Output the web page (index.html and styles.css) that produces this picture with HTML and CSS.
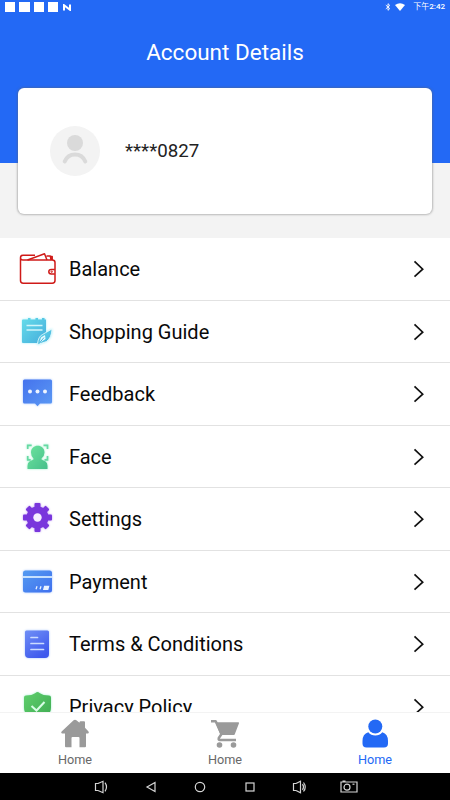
FILE: index.html
```html
<!DOCTYPE html>
<html lang="en">
<head>
<meta charset="utf-8">
<title>Account Details</title>
<link rel="stylesheet" href="styles.css">
</head>
<body>
<div class="screen">
  <header class="hero">
    <div class="status">
      <div class="status-left">
        <i class="square"></i><i class="square"></i><i class="square"></i><i class="square"></i>
        <svg class="nfc" width="8" height="7" viewBox="0 0 8 7"><path d="M1 6.500V1.200L7 5.800V.5" fill="none" stroke="#fff" stroke-width="2"/></svg>
      </div>
      <div class="status-right">
        <svg class="bluetooth" width="6" height="8" viewBox="0 0 6 8"><path d="M.8 2.1 4.8 5.6 3 7.3V.7L4.8 2.4.8 5.9" fill="none" stroke="#fff" stroke-width=".9"/></svg>
        <svg class="wifi" width="10" height="8" viewBox="0 0 10 8"><path d="M0 2Q5-1.600 10 2L5 8Z" fill="#fff"/></svg>
        <span class="clock">下午<b>2:42</b></span>
      </div>
    </div>
    <h1 class="title">Account Details</h1>
  </header>

  <section class="card">
    <svg class="avatar" width="50" height="50" viewBox="0 0 50 50">
      <circle cx="25" cy="25" r="25" fill="#f3f3f3"/>
      <circle cx="25" cy="17" r="8" fill="#dadada"/>
      <path d="M14.700 35.500C18.500 26 31.500 26 35.300 35.500" fill="none" stroke="#dadada" stroke-width="4" stroke-linecap="round"/>
    </svg>
    <span class="phone">****0827</span>
  </section>

  <main class="menu">
    <div class="row">
      <svg class="icon" width="40" height="40" viewBox="0 0 40 40" fill="none" stroke="#cf1a18" stroke-width="1.500" stroke-linejoin="round">
        <path d="M3.500 8.500v23q0 2.700 2.700 2.700h29q2.800 0 2.800-2.700V13.500q0-2.500-2.800-2.500H6q-2.500 0-2.500-2.300Q3.500 6.300 6 6.300h12"/>
        <path d="m10.500 11 17-6.200L30 11M29.500 7h3.800l.8 4M33.500 7.500h1.700V11M37.800 20.500h-3.500q-2.500 0-2.500 2.200t2.500 2.200h3.500"/>
        <circle cx="34.700" cy="22.700" r=".7" stroke-width="1"/>
      </svg>
      <span class="label">Balance</span>
      <svg class="chevron" width="12" height="18" viewBox="0 0 12 18"><path d="m1.500 1.300 8.200 7.900-8.200 7.500"/></svg>
    </div>
    <div class="row">
      <svg class="icon glow-cyan" width="40" height="40" viewBox="0 0 40 40">
        <defs><linearGradient id="cyan" x2="1" y2="1"><stop stop-color="#65dcea"/><stop offset="1" stop-color="#45addc"/></linearGradient></defs>
        <path d="M6 7.500h5V6h2.500v1.500h5V6H21v1.500h4V6h2.500v1.500H29v13.500L20 31H6q-1 0-1-1V8.500q0-1 1-1Z" fill="url(#cyan)"/>
        <path d="M9.500 13.500h16M9.500 18h16" stroke="#d0f5fa" stroke-width="1.500"/>
        <path d="M20.500 32.500q.5-8 5-10L35 17q-.5 9-5.500 12.500Z" fill="url(#cyan)" stroke="#fff" stroke-width=".7"/>
        <path d="m22.500 31 1.500-5.500 4-2.500.5 4Z" fill="#e8fbff"/><path d="m22 31.500 5-6" stroke="#49b4dd"/>
      </svg>
      <span class="label">Shopping Guide</span>
      <svg class="chevron" width="12" height="18" viewBox="0 0 12 18"><path d="m1.500 1.300 8.200 7.900-8.200 7.500"/></svg>
    </div>
    <div class="row">
      <svg class="icon glow-blue" width="40" height="40" viewBox="0 0 40 40">
        <defs><linearGradient id="chat" x2="1" y2="1"><stop stop-color="#4573ed"/><stop offset="1" stop-color="#5b99f4"/></linearGradient></defs>
        <path d="M7.500 5.500h26q1.500 0 1.500 1.500v21q0 1.500-1.500 1.500H23l-2.500 2.700-2.500-2.700H7.500Q6 29.500 6 28V7q0-1.500 1.500-1.500Z" fill="url(#chat)"/>
        <g fill="#edf4ff"><circle cx="13" cy="17.500" r="2"/><circle cx="20.500" cy="17.500" r="2"/><circle cx="28" cy="17.500" r="2"/></g>
      </svg>
      <span class="label">Feedback</span>
      <svg class="chevron" width="12" height="18" viewBox="0 0 12 18"><path d="m1.500 1.300 8.200 7.900-8.200 7.500"/></svg>
    </div>
    <div class="row">
      <svg class="icon glow-green" width="40" height="40" viewBox="0 0 40 40">
        <defs><linearGradient id="face" x2="1" y2="1"><stop stop-color="#6ce39d"/><stop offset="1" stop-color="#46bf8b"/></linearGradient></defs>
        <path d="M10.700 12V8.300h4M26.500 8.300h4V12M10.700 19v3.800h3M30.500 19v3.800h-3" fill="none" stroke="#67d9a3" stroke-width="1.700"/>
        <path d="M14 15.500C14 6.500 27.500 6.500 27.500 15.500q0 3.500-3 6v1l4 2q2 1 2 4.500v3h-20v-3q0-3.500 2-4.500l4-2v-1q-2.500-2.500-2.500-6Z" fill="url(#face)"/>
      </svg>
      <span class="label">Face</span>
      <svg class="chevron" width="12" height="18" viewBox="0 0 12 18"><path d="m1.500 1.300 8.200 7.900-8.200 7.500"/></svg>
    </div>
    <div class="row">
      <svg class="icon glow-purple" width="40" height="40" viewBox="0 0 40 40">
        <g fill="#7936dc">
          <rect x="17.500" y="4" width="6" height="29" rx="1"/><rect x="6" y="15.500" width="29" height="6" rx="1"/>
          <g transform="rotate(45 20.500 18.500)"><rect x="17.700" y="4.300" width="5.600" height="28.400" rx="1"/><rect x="6.300" y="15.700" width="28.400" height="5.600" rx="1"/></g>
          <circle cx="20.500" cy="18.500" r="11"/>
        </g>
        <circle cx="20.500" cy="18.500" r="4.200" fill="#f5eeff"/>
      </svg>
      <span class="label">Settings</span>
      <svg class="chevron" width="12" height="18" viewBox="0 0 12 18"><path d="m1.500 1.300 8.200 7.900-8.200 7.500"/></svg>
    </div>
    <div class="row">
      <svg class="icon glow-blue" width="40" height="40" viewBox="0 0 40 40">
        <defs><linearGradient id="pay" x2="1" y2="1"><stop stop-color="#559bf1"/><stop offset="1" stop-color="#3f70ee"/></linearGradient></defs>
        <rect x="6" y="8.500" width="29" height="22" rx="2.500" fill="url(#pay)"/>
        <path d="M6 15h29" stroke="#d5eaff" stroke-width="1.800"/>
        <path d="m19 27.300 1-3M23 27.300l1-3M26.800 27.300l.8-3h4l-.8 3Z" stroke="#e8f2ff" stroke-width="1.300" fill="#e8f2ff"/>
      </svg>
      <span class="label">Payment</span>
      <svg class="chevron" width="12" height="18" viewBox="0 0 12 18"><path d="m1.500 1.300 8.200 7.900-8.200 7.500"/></svg>
    </div>
    <div class="row">
      <svg class="icon glow-blue" width="40" height="40" viewBox="0 0 40 40">
        <defs><linearGradient id="doc" x2=".6" y2="1"><stop stop-color="#708ff6"/><stop offset="1" stop-color="#3e59ed"/></linearGradient></defs>
        <path d="M9.500 6.500h21q1.500 0 1.500 1.500v22q0 4-4 4H12q-4 0-4-4V8q0-1.500 1.500-1.500Z" fill="url(#doc)"/>
        <path d="M14 13.500h6.500M14 19.500h12.500M14 25.500h12.500" stroke="#cbdcff" stroke-width="1.700" stroke-linecap="round"/>
      </svg>
      <span class="label">Terms &amp; Conditions</span>
      <svg class="chevron" width="12" height="18" viewBox="0 0 12 18"><path d="m1.500 1.300 8.200 7.900-8.200 7.500"/></svg>
    </div>
    <div class="row">
      <svg class="icon glow-green" width="40" height="40" viewBox="0 0 40 40">
        <defs><linearGradient id="shield" x2="1" y2="1"><stop stop-color="#5fcf6c"/><stop offset="1" stop-color="#3da951"/></linearGradient></defs>
        <path d="M20.500 5q1 0 2 1 3.500 2.500 9.500 2.500 2 0 2 2v10q0 9-13.500 14.500Q7 29.500 7 20.500v-10q0-2 2-2 6 0 9.500-2.500 1-1 2-1Z" fill="url(#shield)"/>
        <path d="m14.500 19 5 4.500 8-8.500" stroke="#d7fde5" stroke-width="2" fill="none"/>
      </svg>
      <span class="label">Privacy Policy</span>
      <svg class="chevron" width="12" height="18" viewBox="0 0 12 18"><path d="m1.500 1.300 8.200 7.900-8.200 7.500"/></svg>
    </div>
  </main>

  <nav class="tabs">
    <div class="tab">
      <svg width="30" height="30" viewBox="0 0 30 30" fill="#9a9a9a"><path d="M13.600 1.300q1.400-1.200 2.800 0l3.100 2.500V3.200q0-1 1-1H24q1 0 1 1v5.500l3.500 3.700q.9 1.300-.4 2.100H26v12.800q0 1-1 1h-5.500V19q0-1-1-1h-6q-1 0-1 1v9.300H6q-1 0-1-1V14.500H2q-1.500-.7-.4-2Z"/></svg>
      <span>Home</span>
    </div>
    <div class="tab">
      <svg width="30" height="30" viewBox="0 0 30 30" stroke-linejoin="round"><path d="M6.500 4h21.800L24 15.300H11Z" fill="#9a9a9a" stroke="#9a9a9a" stroke-width="1.500"/><path d="M1 2.200h4.700L11.500 15l-2.700 4q-.6 2 1.200 2h16" fill="none" stroke="#9a9a9a" stroke-width="2.500"/><circle cx="9.500" cy="26" r="2.800" fill="#9a9a9a"/><circle cx="23.500" cy="26" r="2.800" fill="#9a9a9a"/></svg>
      <span>Home</span>
    </div>
    <div class="tab active">
      <svg width="30" height="30" viewBox="0 0 30 30" fill="#2369f5"><circle cx="15.300" cy="7.500" r="7"/><path d="M8.300 13.300q2.700 3.200 7 3.200t7-3.200Q28 15 28 22v2.500q0 4-4 4H6.500q-4 0-4-4V22q0-7 5.800-8.700Z"/></svg>
      <span>Home</span>
    </div>
  </nav>

  <footer class="sysbar">
    <svg width="18" height="14" viewBox="0 0 18 14"><path d="M6 3.500H3.500v7H6M6 3.500l5-2.200v11.400l-5-2.200M13 2.700q3 4.300 0 8.600"/></svg>
    <svg width="18" height="14" viewBox="0 0 18 14"><path d="M13 2.500v9L5 7Z"/></svg>
    <svg width="18" height="14" viewBox="0 0 18 14"><circle cx="9" cy="7" r="4.700"/></svg>
    <svg width="18" height="14" viewBox="0 0 18 14"><rect x="5" y="3" width="8" height="8"/></svg>
    <svg width="18" height="14" viewBox="0 0 18 14"><path d="M6 3.500H3.500v7H6M6 3.500l4.500-2.200v11.400L6 10.500M12.500 4.200q2 2.800 0 5.600M13.500 2.500q3.500 4.500 0 9"/></svg>
    <svg width="18" height="14" viewBox="0 0 18 14"><path d="M1 2h16v10H1ZM2.500 1h3"/><circle cx="7" cy="7.200" r="3"/><path d="M12.500 4.200h2"/></svg>
  </footer>
</div>
</body>
</html>
```

FILE: styles.css
```css
* { box-sizing: border-box; }

body {
  margin: 0;
  font-family: Roboto, "Noto Sans CJK TC", sans-serif;
  color: #090909;
  background: #fff;
}

.screen {
  width: 450px;
  height: 800px;
  overflow: hidden;
  display: flex;
  flex-direction: column;
  background: #f3f3f3;
}

svg { display: block; flex: none; }

.hero {
  flex: none;
  height: 163px;
  background: #2369f5;
  color: #fff;
}

.status {
  height: 14px;
  padding: 0 5px;
  display: flex;
  justify-content: space-between;
  align-items: center;
}

.status-left, .status-right { display: flex; align-items: center; }
.status-left { gap: 4px; }
.square { width: 10.300px; height: 10px; background: #fff; }
.nfc { margin-left: 1px; }
.bluetooth { margin-right: 4px; }
.wifi { margin-right: 8px; }
.clock { font-size: 8px; line-height: 14px; }
.clock b { font-weight: 500; }

.title {
  margin: 23px 0 0;
  text-align: center;
  font-size: 22.500px;
  line-height: 30px;
  font-weight: 400;
}

.card {
  flex: none;
  height: 126px;
  margin: -75px 18px 24px;
  padding: 0 32px;
  display: flex;
  align-items: center;
  gap: 25px;
  background: #fff;
  border-radius: 6px;
  box-shadow: 0 0 2px 1px rgba(100, 100, 100, .4);
}

.phone { font-size: 18.700px; color: #222; }

.menu {
  flex: 1;
  min-height: 0;
  overflow: hidden;
  background: #fff;
}

.row {
  height: 62.500px;
  padding: 1px 25px 0 17px;
  display: flex;
  align-items: center;
  border-bottom: 1px solid #e2e2e2;
}

.label {
  flex: 1;
  margin-left: 12px;
  font-size: 20px;
  line-height: 28px;
}

.chevron { fill: none; stroke: #111; stroke-width: 1.700; }
.glow-cyan { filter: drop-shadow(0 0 1px #9ceefa); }
.glow-blue { filter: drop-shadow(0 0 1px #a3c4ff); }
.glow-green { filter: drop-shadow(0 0 1px #a0f0cc); }
.glow-purple { filter: drop-shadow(0 0 1px #c3a0f5); }

.tabs {
  flex: none;
  height: 61px;
  padding-top: 6px;
  display: grid;
  grid-template-columns: repeat(3, 1fr);
  background: #fff;
  border-top: 1px solid #f3f3f3;
}

.tab {
  display: flex;
  flex-direction: column;
  align-items: center;
  gap: 3px;
  font-size: 12.700px;
  line-height: 16px;
  color: #686868;
}

.tab.active { color: #2369f5; }

.sysbar {
  flex: none;
  height: 27px;
  padding: 0 92px;
  display: flex;
  align-items: center;
  justify-content: space-between;
  background: #000;
}

.sysbar svg { fill: none; stroke: #d5d5d5; stroke-width: 1.200; }
```
